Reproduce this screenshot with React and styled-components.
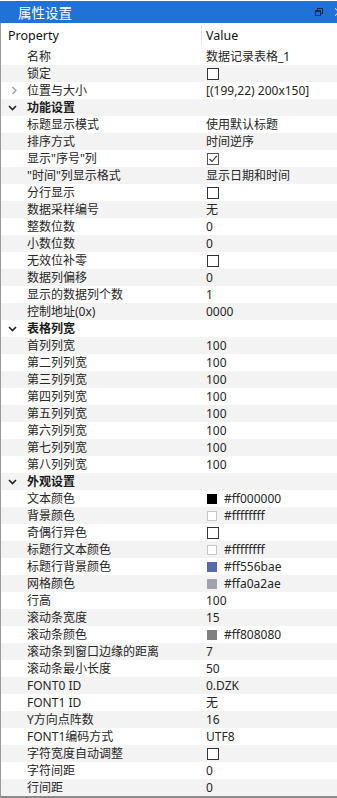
import React from "react";
import styled, { createGlobalStyle } from "styled-components";

const Global = createGlobalStyle`
  html, body { margin: 0; padding: 0; background: #ffffff; }
  body { font-family: "Noto Sans", "Noto Sans CJK SC", sans-serif; }
  * { box-sizing: border-box; }
`;

const Panel = styled.div`
  width: 337px;
  display: flex;
  flex-direction: column;
  padding-top: 1px;
  overflow: hidden;
`;

const TitleBar = styled.div`
  height: 22px;
  background: #2172d6;
  display: flex;
  align-items: center;
  padding-left: 18px;
  position: relative;
`;

const Title = styled.span`
  color: #ffffff;
  font-family: "Noto Sans CJK SC", sans-serif;
  font-size: 13.5px;
  letter-spacing: 0px;
  line-height: 22px;
`;

const TitleIcon = styled.span`
  margin-left: auto;
  margin-right: 14px;
  display: flex;
  align-items: center;
`;

const CloseStub = styled.span`
  position: absolute;
  right: -5px;
  top: 7px;
  width: 7px;
  height: 8px;
  display: flex;
`;

const Grid = styled.div`
  border-left: 1px solid #9a9a9a;
  border-bottom: 2px solid #8a8a8a;
  display: flex;
  flex-direction: column;
`;

const HeaderRow = styled.div`
  height: 25px;
  display: grid;
  grid-template-columns: 201px 1fr;
  align-items: stretch;
  font-size: 12.5px;
  color: #111;
`;

const HeaderCell = styled.div`
  display: flex;
  align-items: center;
  padding-left: ${(p) => p.$pad}px;
  border-right: ${(p) => (p.$divider ? "1px solid #e6e6e6" : "none")};
  margin: 2px 0;
`;

const Row = styled.div`
  height: 17px;
  display: grid;
  grid-template-columns: 205px 1fr;
  align-items: center;
  background: ${(p) => (p.$alt ? "#f3f3f3" : "#ffffff")};
  font-size: 12px;
  color: #262626;
  line-height: 17px;
`;

const LabelCell = styled.div`
  display: flex;
  align-items: center;
  padding-left: 7px;
  white-space: nowrap;
  font-weight: ${(p) => (p.$section ? 700 : 400)};
  color: ${(p) => (p.$section ? "#1a1a1a" : "#262626")};
`;

const Expander = styled.span`
  width: 19px;
  height: 17px;
  display: flex;
  align-items: center;
  flex-shrink: 0;
`;

const ValueCell = styled.div`
  display: flex;
  align-items: center;
  white-space: nowrap;
  gap: 7px;
`;

const Check = styled.span`
  width: 12px;
  height: 12px;
  margin-left: 1px;
  border: 1px solid ${(p) => (p.$checked ? "#555" : "#333")};
  background: #fff;
  display: flex;
  align-items: center;
  justify-content: center;
`;

const Swatch = styled.span`
  width: 10px;
  height: 10px;
  margin-left: 1px;
  background: ${(p) => p.$color};
  border: 1px solid ${(p) => p.$border || p.$color};
`;

const ChevronDown = () => (
  <svg width="9" height="6" viewBox="0 0 9 6">
    <polyline points="1,1 4.5,4.5 8,1" fill="none" stroke="#222" strokeWidth="1.6" />
  </svg>
);

const ChevronRight = () => (
  <svg width="9" height="9" viewBox="0 0 9 9" style={{ marginLeft: 2 }}>
    <polyline points="2.5,1 6,4.5 2.5,8" fill="none" stroke="#9a9a9a" strokeWidth="1.2" />
  </svg>
);

const CheckMark = () => (
  <svg width="10" height="10" viewBox="0 0 10 10">
    <polyline points="1.5,5 4,7.5 8.8,1.8" fill="none" stroke="#333" strokeWidth="1.1" />
  </svg>
);

const RestoreIcon = () => (
  <svg width="8" height="8" viewBox="0 0 8 8">
    <rect x="2.5" y="0.5" width="5" height="5" fill="none" stroke="#1b2d4f" strokeWidth="1" />
    <rect x="0.5" y="2.5" width="5" height="5" fill="#2172d6" stroke="#1b2d4f" strokeWidth="1" />
    <line x1="0.5" y1="3.5" x2="5.5" y2="3.5" stroke="#1b2d4f" strokeWidth="1" />
  </svg>
);

const rows = [
  { label: "名称", value: "数据记录表格_1" },
  { label: "锁定", check: false },
  { label: "位置与大小", value: "[(199,22) 200x150]", collapsed: true },
  { label: "功能设置", section: true },
  { label: "标题显示模式", value: "使用默认标题" },
  { label: "排序方式", value: "时间逆序" },
  { label: "显示\"序号\"列", check: true },
  { label: "\"时间\"列显示格式", value: "显示日期和时间" },
  { label: "分行显示", check: false },
  { label: "数据采样编号", value: "无" },
  { label: "整数位数", value: "0" },
  { label: "小数位数", value: "0" },
  { label: "无效位补零", check: false },
  { label: "数据列偏移", value: "0" },
  { label: "显示的数据列个数", value: "1" },
  { label: "控制地址(0x)", value: "0000" },
  { label: "表格列宽", section: true },
  { label: "首列列宽", value: "100" },
  { label: "第二列列宽", value: "100" },
  { label: "第三列列宽", value: "100" },
  { label: "第四列列宽", value: "100" },
  { label: "第五列列宽", value: "100" },
  { label: "第六列列宽", value: "100" },
  { label: "第七列列宽", value: "100" },
  { label: "第八列列宽", value: "100" },
  { label: "外观设置", section: true },
  { label: "文本颜色", color: "#000000", value: "#ff000000" },
  { label: "背景颜色", color: "#ffffff", border: "#c6c6c6", value: "#ffffffff" },
  { label: "奇偶行异色", check: false },
  { label: "标题行文本颜色", color: "#ffffff", border: "#c6c6c6", value: "#ffffffff" },
  { label: "标题行背景颜色", color: "#556bae", value: "#ff556bae" },
  { label: "网格颜色", color: "#a0a2ae", value: "#ffa0a2ae" },
  { label: "行高", value: "100" },
  { label: "滚动条宽度", value: "15" },
  { label: "滚动条颜色", color: "#808080", value: "#ff808080" },
  { label: "滚动条到窗口边缘的距离", value: "7" },
  { label: "滚动条最小长度", value: "50" },
  { label: "FONT0 ID", value: "0.DZK" },
  { label: "FONT1 ID", value: "无" },
  { label: "Y方向点阵数", value: "16" },
  { label: "FONT1编码方式", value: "UTF8" },
  { label: "字符宽度自动调整", check: false },
  { label: "字符间距", value: "0" },
  { label: "行间距", value: "0" },
];

const renderValue = (r) => {
  if (r.section) return null;
  if (r.check !== undefined)
    return <Check $checked={r.check}>{r.check ? <CheckMark /> : null}</Check>;
  if (r.color)
    return (
      <>
        <Swatch $color={r.color} $border={r.border} />
        <span>{r.value}</span>
      </>
    );
  return <span>{r.value}</span>;
};

export default function App() {
  return (
    <>
      <Global />
      <Panel>
        <TitleBar>
          <Title>属性设置</Title>
          <TitleIcon>
            <RestoreIcon />
          </TitleIcon>
          <CloseStub>
            <svg width="7" height="8" viewBox="0 0 7 8">
              <line x1="0" y1="0" x2="7" y2="8" stroke="#e8eefa" strokeWidth="1" />
              <line x1="7" y1="0" x2="0" y2="8" stroke="#e8eefa" strokeWidth="1" />
            </svg>
          </CloseStub>
        </TitleBar>
        <Grid>
          <HeaderRow>
            <HeaderCell $pad={7} $divider>Property</HeaderCell>
            <HeaderCell $pad={4}>Value</HeaderCell>
          </HeaderRow>
          {rows.map((r, i) => (
            <Row key={i} $alt={i % 2 === 1}>
              <LabelCell $section={r.section}>
                <Expander>
                  {r.section ? <ChevronDown /> : r.collapsed ? <ChevronRight /> : null}
                </Expander>
                {r.label}
              </LabelCell>
              <ValueCell>{renderValue(r)}</ValueCell>
            </Row>
          ))}
        </Grid>
      </Panel>
    </>
  );
}
